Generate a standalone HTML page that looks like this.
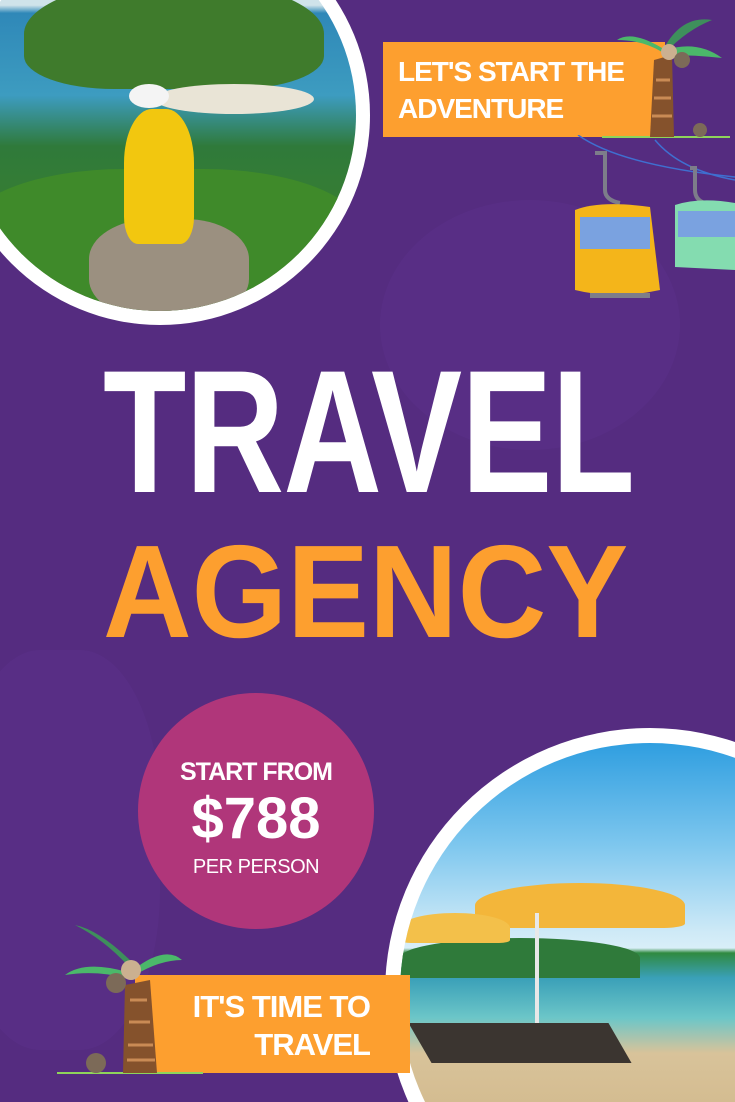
<!DOCTYPE html>
<html><head><meta charset="utf-8"><style>
html,body{margin:0;width:735px;height:1102px;overflow:hidden}
body{background:#552c80;font-family:"Liberation Sans",sans-serif}
#w{position:relative;width:735px;height:1102px;overflow:hidden;background:#552c80}
.a{position:absolute}
.txt{color:#fff;font-weight:bold;white-space:nowrap}
</style></head><body><div id="w">
<div class="a" style="left:380px;top:200px;width:300px;height:250px;border-radius:50%;background:#5a3088;opacity:.6"></div>
<div class="a" style="left:-40px;top:650px;width:200px;height:400px;border-radius:40%;background:#5a3088;opacity:.6"></div>

<div class="a" style="left:-50px;top:-95px;width:420px;height:420px;border-radius:50%;background:#fff"></div>
<div class="a" style="left:-36px;top:-81px;width:392px;height:392px;border-radius:50%;overflow:hidden;background:linear-gradient(#cfe3ea 0,#cfe3ea 22%,#2f88b8 24%,#3d9cc0 45%,#2f7a3a 58%,#3a7f30 80%,#8a8070 100%)">
  <div class="a" style="left:60px;top:60px;width:300px;height:110px;border-radius:50% 50% 30% 30%;background:#3f7b2c"></div>
  <div class="a" style="left:190px;top:165px;width:160px;height:30px;border-radius:50%;background:#e9e4d6"></div>
  <div class="a" style="left:0;top:250px;width:400px;height:160px;background:#3f8a2a;border-radius:40% 40% 0 0"></div>
  <div class="a" style="left:125px;top:300px;width:160px;height:100px;border-radius:40%;background:#9b9080"></div>
  <div class="a" style="left:160px;top:190px;width:70px;height:135px;background:#f2c70f;border-radius:40% 40% 20% 20%"></div>
  <div class="a" style="left:165px;top:165px;width:40px;height:24px;border-radius:50%;background:#f4f4f4"></div>
</div>

<div class="a" style="left:383px;top:42px;width:282px;height:95px;background:#fd9f2f"></div>
<div class="a txt" style="left:398px;top:53px;font-size:28px;line-height:37px;letter-spacing:-1px">LET'S START THE<br>ADVENTURE</div>
<svg class="a" style="left:602px;top:10px" width="130" height="130" viewBox="0 0 130 130">
<line x1="0" y1="127" x2="128" y2="127" stroke="#8fd45a" stroke-width="2"/>
<path d="M52 50 L70 45 L72 127 L48 127 Z" fill="#85522c"/>
<g stroke="#c98b55" stroke-width="3"><line x1="54" y1="70" x2="68" y2="70"/><line x1="52" y1="88" x2="69" y2="88"/><line x1="50" y1="106" x2="70" y2="106"/></g>
<path d="M60 38 Q30 20 15 30 Q40 30 60 42Z" fill="#4bb86a"/>
<path d="M62 38 Q80 5 110 10 Q85 20 64 42Z" fill="#3e8f5c"/>
<path d="M64 40 Q95 30 120 48 Q95 45 64 45Z" fill="#4bb86a"/>
<circle cx="67" cy="42" r="8" fill="#cbb090"/><circle cx="80" cy="50" r="8" fill="#7c6a58"/>
<circle cx="98" cy="120" r="7" fill="#7c6a58"/>
</svg>
<svg class="a" style="left:560px;top:135px" width="175" height="170" viewBox="0 0 175 170">
<path d="M18 0 Q60 30 175 42" stroke="#3f6fd0" stroke-width="1.5" fill="none"/>
<path d="M95 5 Q120 35 175 45" stroke="#3f6fd0" stroke-width="1.5" fill="none"/>
<path d="M35 18 L45 18 L45 55 Q45 65 60 68" stroke="#7d7d8a" stroke-width="4" fill="none"/>
<path d="M130 33 L135 33 L135 55 Q135 65 145 68" stroke="#7d7d8a" stroke-width="4" fill="none"/>
<path d="M15 75 Q40 65 90 72 L100 155 Q55 165 15 155 Z" fill="#f4b51a"/>
<rect x="20" y="82" width="70" height="32" fill="#7aa2e0"/>
<rect x="30" y="158" width="60" height="5" fill="#7d7d8a"/>
<path d="M115 70 Q140 62 175 68 L175 135 L115 132 Z" fill="#84dcb0"/>
<rect x="118" y="76" width="57" height="26" fill="#7aa2e0"/>
</svg>

<div class="a txt" style="left:103px;top:345px;font-size:175px;line-height:175px;transform:scaleX(.78);transform-origin:0 0;letter-spacing:-1px">TRAVEL</div>
<div class="a txt" style="left:103px;top:526px;font-size:132px;line-height:132px;color:#fd9f2f;transform:scaleX(.93);transform-origin:0 0">AGENCY</div>

<div class="a" style="left:138px;top:693px;width:236px;height:236px;border-radius:50%;background:#b0367a"></div>
<div class="a txt" style="left:138px;top:758px;width:236px;text-align:center;font-size:25px;letter-spacing:-1px">START FROM</div>
<div class="a txt" style="left:138px;top:787px;width:236px;text-align:center;font-size:58px;line-height:64px">$788</div>
<div class="a" style="left:138px;top:856px;width:236px;text-align:center;font-size:20px;color:#fff;letter-spacing:-0.5px">PER PERSON</div>

<div class="a" style="left:385px;top:728px;width:530px;height:530px;border-radius:50%;background:#fff"></div>
<div class="a" style="left:400px;top:743px;width:500px;height:500px;border-radius:50%;overflow:hidden;background:linear-gradient(#2f9ee0 0,#7cc6ee 20%,#cfeaf7 38%,#d8eef8 41%,#2f8a40 42%,#3aa0b8 47%,#6cc6c8 55%,#d8c39a 62%,#c9a976 100%)">
  <div class="a" style="left:0;top:195px;width:240px;height:40px;border-radius:50% 50% 0 0;background:#2f7a3a"></div>
  <div class="a" style="left:75px;top:140px;width:210px;height:45px;border-radius:50% 50% 10% 10%;background:#f3b63a"></div>
  <div class="a" style="left:135px;top:170px;width:4px;height:110px;background:#e8e8e8"></div>
  <div class="a" style="left:0;top:170px;width:110px;height:30px;border-radius:50% 50% 10% 10%;background:#f3c04a"></div>
  <div class="a" style="left:20px;top:280px;width:200px;height:40px;background:#3b3530;transform:skewX(30deg)"></div>
</div>

<div class="a" style="left:135px;top:975px;width:275px;height:98px;background:#fd9f2f"></div>
<div class="a txt" style="left:135px;top:988px;width:235px;text-align:right;font-size:31px;line-height:38px;letter-spacing:-1px">IT'S TIME TO<br>TRAVEL</div>
<svg class="a" style="left:55px;top:920px" width="150" height="160" viewBox="0 0 150 160">
<line x1="2" y1="153" x2="148" y2="153" stroke="#8fd45a" stroke-width="2"/>
<path d="M70 65 L95 60 L102 153 L68 153 Z" fill="#85522c"/>
<g stroke="#c98b55" stroke-width="3"><line x1="75" y1="80" x2="92" y2="80"/><line x1="74" y1="102" x2="95" y2="102"/><line x1="73" y1="125" x2="98" y2="125"/><line x1="72" y1="140" x2="100" y2="140"/></g>
<path d="M75 48 Q50 20 20 5 Q45 10 80 45Z" fill="#3e8f5c"/>
<path d="M72 52 Q30 40 10 55 Q40 50 72 58Z" fill="#4bb86a"/>
<path d="M78 50 Q110 25 127 40 Q105 40 80 55Z" fill="#4bb86a"/>
<circle cx="76" cy="50" r="10" fill="#cbb090"/><circle cx="61" cy="63" r="10" fill="#7c6a58"/>
<circle cx="41" cy="143" r="10" fill="#7c6a58"/>
</svg>
</div></body></html>
